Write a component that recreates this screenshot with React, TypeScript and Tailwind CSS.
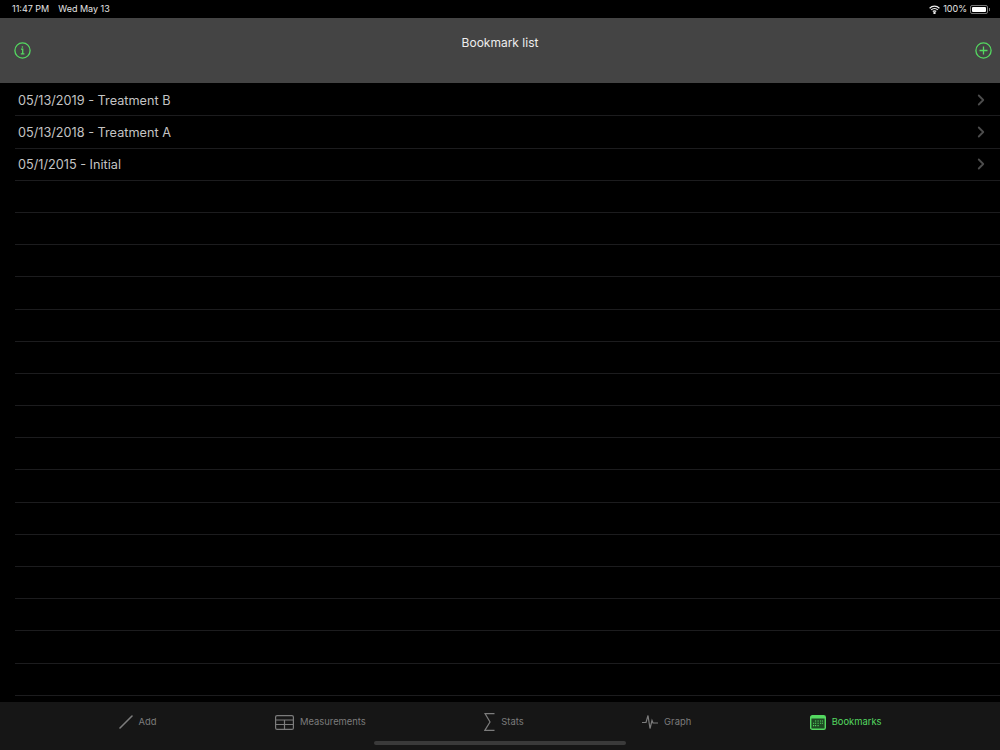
import { ChevronRight } from "lucide-react";

const rows = ["05/13/2019 - Treatment B", "05/13/2018 - Treatment A", "05/1/2015 - Initial"];
const emptyRows = Array.from({ length: 16 }, (_, i) => i);

function TabIcon({ name }: { name: string }) {
  if (name === "Add") {
    return (
      <svg width="14" height="14" viewBox="0 0 14 14" fill="none" stroke="currentColor" strokeWidth="1.6" strokeLinecap="round">
        <path d="M1 13 13 1" />
      </svg>
    );
  }
  if (name === "Measurements") {
    return (
      <svg width="19" height="15" viewBox="0 0 19 15" fill="none" stroke="currentColor" strokeWidth="1.2">
        <rect x="0.6" y="0.6" width="17.8" height="13.8" rx="1.5" />
        <path d="M0.5 5h18M0.5 9.5h18M9.5 5v9.5" />
      </svg>
    );
  }
  if (name === "Stats") {
    return (
      <svg width="11" height="18" viewBox="0 0 11 18" fill="none" stroke="currentColor" strokeWidth="1.2">
        <path d="M10.5 0.6H1L6 9 0.8 17.4h9.7" />
      </svg>
    );
  }
  if (name === "Graph") {
    return (
      <svg width="16" height="16" viewBox="0 0 16 16" fill="none" stroke="currentColor" strokeWidth="1.2">
        <path d="M0 8.5h4l2-7 2 13 2-8 1 2.5h5" />
      </svg>
    );
  }
  return (
    <svg width="16" height="15" viewBox="0 0 16 15" fill="none">
      <rect x="0.7" y="0.7" width="14.6" height="13.6" rx="1.6" fill="#1f4a24" stroke="#54d860" strokeWidth="1.4" />
      <path d="M1 1h14v2.5H1z" fill="#54d860" />
      <path d="M5 6h1.2M7.5 6h1.2M10 6h1.2M12 6h1M3 8.3h1.2M5 8.3h1.2M7.5 8.3h1.2M10 8.3h1.2M12 8.3h1M3 10.6h1.2M5 10.6h1.2M7.5 10.6h1.2" stroke="#54d860" strokeWidth="1.1" />
    </svg>
  );
}

export default function App() {
  return (
    <div className="relative flex h-[750px] w-[1000px] flex-col overflow-hidden bg-black font-['Inter',sans-serif]">
      {/* status bar */}
      <div className="flex h-[18px] shrink-0 items-center justify-between pl-3 pr-[10px] text-[9px] text-[#e4e4e4]">
        <div className="flex gap-[9px]">
          <span>11:47 PM</span>
          <span>Wed May 13</span>
        </div>
        <div className="flex items-center gap-[3px]">
          <svg width="11" height="9" viewBox="0 0 11 9" fill="none" stroke="#eeeeee" strokeWidth="1.2">
            <path d="M0.6 3.2a7 7 0 0 1 9.8 0M2.2 4.9a4.7 4.7 0 0 1 6.6 0M3.8 6.5a2.4 2.4 0 0 1 3.4 0" />
            <circle cx="5.5" cy="8" r="0.6" fill="#eeeeee" />
          </svg>
          <span>100%</span>
          <div className="flex items-center">
            <div className="h-[9px] w-[18px] rounded-[2px] border border-[#777] p-px">
              <div className="h-full w-full rounded-[1px] bg-white" />
            </div>
            <div className="ml-px h-[3px] w-px bg-[#777]" />
          </div>
        </div>
      </div>

      {/* header */}
      <div className="relative flex h-[65px] shrink-0 items-center justify-between bg-[#444444] pl-[14px] pr-2">
        <svg width="17" height="17" viewBox="0 0 17 17" fill="none" stroke="#54d860" strokeWidth="1.3">
          <circle cx="8.5" cy="8.5" r="7.6" />
          <path d="M7 7.2h1.7v4.6M6.8 11.9h3.6" />
          <circle cx="8.4" cy="5" r="0.8" fill="#54d860" stroke="none" />
        </svg>
        <div className="absolute inset-x-0 top-[17px] text-center text-[12px] leading-4 text-[#eeeeee]">Bookmark list</div>
        <svg width="17" height="17" viewBox="0 0 17 17" fill="none" stroke="#54d860" strokeWidth="1.3">
          <circle cx="8.5" cy="8.5" r="7.6" />
          <path d="M8.5 4.5v8M4.5 8.5h8" />
        </svg>
      </div>

      {/* list */}
      <div className="min-h-0 flex-1 overflow-hidden pl-[15px] pt-[1.2px]">
        {rows.map((r) => (
          <div key={r} className="flex h-[32.2px] items-center justify-between border-b border-[#1c1c1e] pl-[3px] pr-[10px] text-[12.7px] text-[#c4c4c4]">
            <span className="pt-px">{r}</span>
            <ChevronRight size={18} strokeWidth={2.4} className="text-[#4c4c4c]" />
          </div>
        ))}
        {emptyRows.map((i) => (
          <div key={i} className="h-[32.2px] border-b border-[#1c1c1e]" />
        ))}
      </div>

      {/* tab bar */}
      <div className="flex h-[48px] shrink-0 justify-evenly bg-[#161616] pt-[10px]">
        {["Add", "Measurements", "Stats", "Graph", "Bookmarks"].map((t) => (
          <div key={t} className={`flex h-[20px] items-center gap-[6px] text-[9.4px] ${t === "Bookmarks" ? "text-[#54d860]" : "text-[#7c7c7c]"}`}>
            <TabIcon name={t} />
            <span>{t}</span>
          </div>
        ))}
      </div>
      <div className="absolute bottom-[5px] left-[374px] h-[4px] w-[252px] rounded-full bg-[#3a3a3a]" />
    </div>
  );
}
